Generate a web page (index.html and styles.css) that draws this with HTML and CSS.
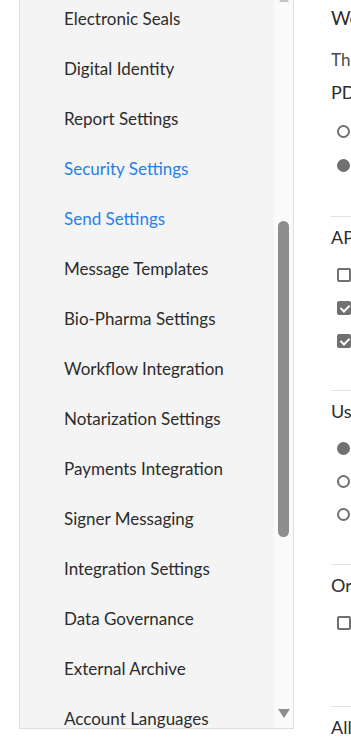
FILE: index.html
```html
<!DOCTYPE html>
<html lang="en">
<head>
    <meta charset="UTF-8">
    <meta name="viewport" content="width=device-width, initial-scale=1.0">
    <title>Security Settings</title>
    <link rel="stylesheet" href="styles.css">
</head>
<body>
    <aside class="sidebar">
        <ul class="side-menu">
            <li><a href="#">Electronic Seals</a></li>
            <li><a href="#">Digital Identity</a></li>
            <li><a href="#">Report Settings</a></li>
            <li><a href="#" class="active">Security Settings</a></li>
            <li><a href="#" class="active">Send Settings</a></li>
            <li><a href="#">Message Templates</a></li>
            <li><a href="#">Bio-Pharma Settings</a></li>
            <li><a href="#">Workflow Integration</a></li>
            <li><a href="#">Notarization Settings</a></li>
            <li><a href="#">Payments Integration</a></li>
            <li><a href="#">Signer Messaging</a></li>
            <li><a href="#">Integration Settings</a></li>
            <li><a href="#">Data Governance</a></li>
            <li><a href="#">External Archive</a></li>
            <li><a href="#">Account Languages</a></li>
        </ul>
        <div class="scroll-track">
            <span class="arrow-up"></span>
            <span class="thumb"></span>
            <span class="arrow-down"></span>
        </div>
    </aside>

    <main class="content">
        <h2 class="page-title">Web Access Settings</h2>
        <p class="intro">The settings below apply to your account.</p>

        <section class="group first">
            <h3>PDF encryption type</h3>
            <div class="opts">
                <label class="opt"><span class="radio"></span>Standard encryption</label>
                <label class="opt"><span class="radio on"></span>Strong encryption</label>
            </div>
        </section>

        <section class="group">
            <h3>API access</h3>
            <div class="opts">
                <label class="opt"><span class="check"></span>Restrict API access</label>
                <label class="opt"><span class="check on"></span>Allow OAuth tokens</label>
                <label class="opt"><span class="check on"></span>Allow integration keys</label>
            </div>
        </section>

        <section class="group">
            <h3>User passwords</h3>
            <div class="opts">
                <label class="opt"><span class="radio on"></span>Default policy</label>
                <label class="opt"><span class="radio"></span>Strong policy</label>
                <label class="opt"><span class="radio"></span>Custom policy</label>
            </div>
        </section>

        <section class="group tall">
            <h3>Organization sharing</h3>
            <div class="opts">
                <label class="opt"><span class="check"></span>Allow sharing outside organization</label>
            </div>
        </section>

        <section class="group last">
            <h3>Allowed IP ranges</h3>
        </section>
    </main>
</body>
</html>
```

FILE: styles.css
```css
* {margin:0;padding:0;box-sizing:border-box;}
body {background:#fff;color:#2c2c2c;font-family:'Lato', 'Noto Sans', sans-serif;display:flex;align-items:flex-start;overflow:hidden;height:748px;}

.sidebar {flex:none;margin-left:19px;width:275px;height:729px;display:flex;background:#f4f4f4;border:1px solid #dedede;border-top:none;overflow:hidden;}
.side-menu {list-style:none;flex:1;}
.side-menu li {height:50px;padding-left:44px;}
.side-menu a {display:block;line-height:37px;font-size:17px;color:#2c2c2c;text-decoration:none;white-space:nowrap;}
.side-menu a.active {color:#2680eb;}

.scroll-track {flex:none;width:19px;background:#fafafa;display:flex;flex-direction:column;align-items:center;}
.arrow-up {width:0;height:0;margin-top:-6px;border-left:5px solid transparent;border-right:5px solid transparent;border-bottom:8px solid #c4c4c4;}
.thumb {width:11px;height:316px;margin-top:219px;border-radius:6px;background:#8d8d8d;}
.arrow-down {width:0;height:0;margin-top:auto;margin-bottom:10px;border-left:6px solid transparent;border-right:6px solid transparent;border-top:9px solid #8d8d8d;}

.content {flex:none;width:560px;padding-left:37px;white-space:nowrap;}
.page-title {font-size:19px;font-weight:400;line-height:36px;color:#2c2c2c;}
.intro {font-size:17px;line-height:24px;margin-top:12px;color:#4b4b4b;}

.group {border-bottom:1px solid #e1e1e1;padding:5px 0 33px;}
.group h3 {font-size:18px;font-weight:400;line-height:30px;}
.group.first {margin-top:5px;padding-top:0;padding-bottom:34px;}
.group.first .opts {margin-top:7px;}
.group.first .opt {height:34px;}
.group.tall {padding-bottom:67px;}
.group.last {border-bottom:none;}

.opts {margin-top:6px;}
.opt {display:flex;align-items:center;gap:9px;height:33px;font-size:16px;padding-left:6px;}
.radio {width:13px;height:13px;border-radius:50%;border:2px solid #707070;flex:none;}
.radio.on {background:#707070;}
.check {width:14px;height:14px;border-radius:2px;border:2px solid #707070;flex:none;position:relative;}
.check.on {background:#707070;}
.check.on::after {content:"";position:absolute;left:3px;top:0;width:4px;height:7px;border:solid #fff;border-width:0 2px 2px 0;transform:rotate(45deg);}
```
